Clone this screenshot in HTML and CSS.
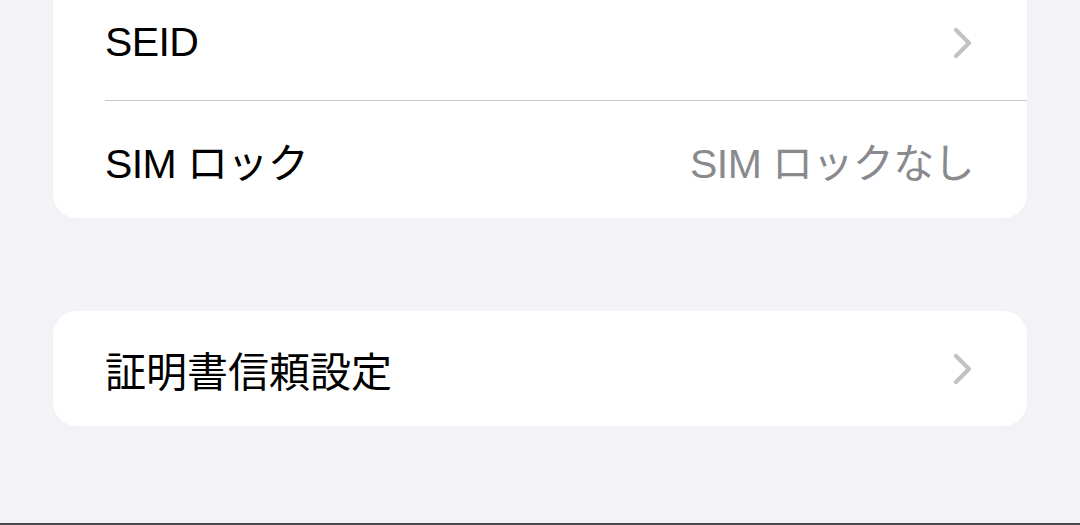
FILE: index.html
```html
<!DOCTYPE html>
<html lang="ja">
<head>
<meta charset="utf-8">
<link rel="stylesheet" href="styles.css">
</head>
<body>
<main class="page">
  <section class="group group-first">
    <div class="row">
      <span class="label">SEID</span>
      <svg class="chevron" viewBox="0 0 20 32" width="20" height="32"><path d="M3 3 L16 16 L3 29" fill="none" stroke="currentColor" stroke-width="4.2" stroke-linecap="round" stroke-linejoin="round"/></svg>
    </div>
    <div class="row">
      <span class="label">SIM ロック</span>
      <span class="value">SIM ロックなし</span>
    </div>
  </section>
  <section class="group group-last">
    <div class="row">
      <span class="label label-kanji">証明書信頼設定</span>
      <svg class="chevron" viewBox="0 0 20 32" width="20" height="32"><path d="M3 3 L16 16 L3 29" fill="none" stroke="currentColor" stroke-width="4.2" stroke-linecap="round" stroke-linejoin="round"/></svg>
    </div>
  </section>
</main>
<div class="edge"></div>
</body>
</html>
```
FILE: styles.css
```css
html, body {
  margin: 0;
  padding: 0;
  height: 100%;
}

body {
  background: #f2f2f7;
  font-family: "Liberation Sans", "Noto Sans CJK JP", sans-serif;
  color: #000;
  display: flex;
  flex-direction: column;
  overflow: hidden;
}

.page {
  padding: 0 53px;
  display: flex;
  flex-direction: column;
  gap: 93px;
}

.group {
  background: #fff;
  border-radius: 24px;
}

.group-first {
  margin-top: -16px;
  border-top-left-radius: 0;
  border-top-right-radius: 0;
}

.row {
  height: 117px;
  display: flex;
  align-items: center;
  justify-content: space-between;
  padding: 0 53px 0 52px;
  position: relative;
}

.group-last .row {
  height: 115px;
}

.row + .row::before {
  content: "";
  position: absolute;
  top: -1px;
  left: 52px;
  right: 0;
  height: 1px;
  background: #c8c8cc;
}

.label,
.value {
  font-size: 41px;
  letter-spacing: -0.6px;
}

.label-kanji {
  letter-spacing: 0;
}

.value {
  color: #8a8a8e;
}

.chevron {
  color: #c2c2c5;
  margin-right: 1px;
}

.edge {
  margin-top: auto;
  height: 2px;
  background: #4a4a4c;
}
```
